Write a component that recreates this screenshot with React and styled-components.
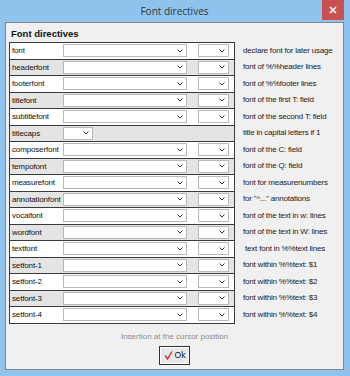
import React from "react";
import styled, { createGlobalStyle } from "styled-components";

const Global = createGlobalStyle`
  html, body { margin: 0; padding: 0; background: #8fc3ee; }
  body { font-family: "Liberation Sans", Arial, sans-serif; }
`;

const Window = styled.div`
  width: 350px;
  height: 376px;
  box-sizing: border-box;
  background: #8fc3ee;
  display: flex;
  flex-direction: column;
  padding: 0 6px 6px 5px;
`;

const TitleBar = styled.div`
  height: 22px;
  position: relative;
  display: flex;
  align-items: center;
  justify-content: center;
  font-family: "Open Sans", "Liberation Sans", sans-serif;
  font-size: 10px;
  color: #333;
`;

const Close = styled.div`
  position: absolute;
  right: 0;
  top: 0;
  width: 22px;
  height: 20px;
  background: #c75150;
  display: flex;
  align-items: center;
  justify-content: center;
`;

const Client = styled.div`
  flex: 1;
  background: #f0f0f0;
  border: 1px solid #7d8790;
  display: flex;
  flex-direction: column;
  padding: 3px 0 0 3px;
`;

const Heading = styled.div`
  font-weight: bold;
  font-size: 9.5px;
  color: #111;
  padding: 2px 0 0 2px;
  height: 14px;
`;

const Body = styled.div`
  display: flex;
  align-items: flex-start;
`;

const Table = styled.div`
  width: 224px;
  border: 1px solid #3a3a3a;
  border-bottom: none;
  background: #fff;
`;

const Row = styled.div`
  display: flex;
  align-items: center;
  height: 16.5px;
  box-sizing: border-box;
  border-bottom: 1px solid #3a3a3a;
  background: ${(p) => (p.$alt ? "#e4e4e4" : "#fff")};
`;

const Name = styled.div`
  width: 52px;
  padding-left: 2px;
  box-sizing: border-box;
  font-size: 8px;
  letter-spacing: -0.15px;
  color: #111;
  white-space: nowrap;
  overflow: hidden;
`;

const Combo = styled.div`
  width: ${(p) => p.$w}px;
  height: 13px;
  margin-left: ${(p) => p.$ml}px;
  box-sizing: border-box;
  background: #fff;
  border: 1px solid #b8b8b8;
  display: flex;
  align-items: center;
  justify-content: flex-end;
  padding-right: 3px;
`;

const Descs = styled.div`
  display: flex;
  flex-direction: column;
  padding-left: 8px;
`;

const Desc = styled.div`
  height: 16.5px;
  display: flex;
  align-items: center;
  font-size: 8px;
  letter-spacing: -0.2px;
  color: #222;
  white-space: pre;
`;

const Footer = styled.div`
  display: flex;
  flex-direction: column;
  align-items: center;
  padding-top: 8px;
  gap: 5px;
  padding-right: 3px;
`;

const Hint = styled.div`
  font-size: 8px;
  color: #8c8c8c;
`;

const OkButton = styled.button`
  width: 31px;
  height: 19px;
  box-sizing: border-box;
  border: 1px solid #333;
  background: #e8e8e8;
  box-shadow: inset 0 0 0 1px #fff;
  display: flex;
  align-items: center;
  justify-content: center;
  gap: 2px;
  padding: 0;
  font-family: "Liberation Sans", Arial, sans-serif;
  font-size: 8.5px;
  color: #111;
`;

const Chevron = () => (
  <svg width="6" height="4" viewBox="0 0 6 4">
    <polyline points="0.5,0.5 3,3 5.5,0.5" fill="none" stroke="#333" strokeWidth="1" />
  </svg>
);

const rows = [
  ["font", "declare font for later usage"],
  ["headerfont", "font of %%header lines"],
  ["footerfont", "font of %%footer lines"],
  ["titlefont", "font of the first T: field"],
  ["subtitlefont", "font of the second T: field"],
  ["titlecaps", "title in capital letters if 1", true],
  ["composerfont", "font of the C: field"],
  ["tempofont", "font of the Q: field"],
  ["measurefont", "font for measurenumbers"],
  ["annotationfont", "for \"^...\" annotations"],
  ["vocalfont", "font of the text in w: lines"],
  ["wordfont", "font of the text in W: lines"],
  ["textfont", " text font in %%text lines"],
  ["setfont-1", "font within %%text: $1"],
  ["setfont-2", "font within %%text: $2"],
  ["setfont-3", "font within %%text: $3"],
  ["setfont-4", "font within %%text: $4"],
];

export default function App() {
  return (
    <>
      <Global />
      <Window>
        <TitleBar>
          Font directives
          <Close>
            <svg width="8" height="8" viewBox="0 0 8 8">
              <path d="M1 1 L7 7 M7 1 L1 7" stroke="#fff" strokeWidth="1.6" />
            </svg>
          </Close>
        </TitleBar>
        <Client>
          <Heading>Font directives</Heading>
          <Body>
            <Table>
              {rows.map(([name, , single], i) => (
                <Row key={name} $alt={i % 2 === 1}>
                  <Name>{name}</Name>
                  {single ? (
                    <Combo $w={30} $ml={1}>
                      <Chevron />
                    </Combo>
                  ) : (
                    <>
                      <Combo $w={124} $ml={1}>
                        <Chevron />
                      </Combo>
                      <Combo $w={31} $ml={11}>
                        <Chevron />
                      </Combo>
                    </>
                  )}
                </Row>
              ))}
            </Table>
            <Descs>
              {rows.map(([name, desc]) => (
                <Desc key={name}>{desc}</Desc>
              ))}
            </Descs>
          </Body>
          <Footer>
            <Hint>Insertion at the cursor position</Hint>
            <OkButton>
              <svg width="9" height="9" viewBox="0 0 9 9">
                <path d="M1 4.5 L3.5 8 L8 0.5" fill="none" stroke="#e0242a" strokeWidth="1.3" />
              </svg>
              Ok
            </OkButton>
          </Footer>
        </Client>
      </Window>
    </>
  );
}
